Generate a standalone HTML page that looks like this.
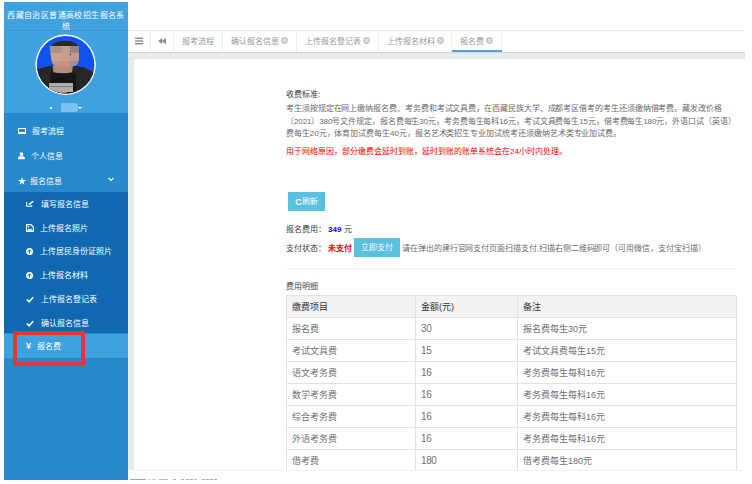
<!DOCTYPE html>
<html lang="zh-CN">
<head>
<meta charset="utf-8">
<style>
*{box-sizing:border-box;margin:0;padding:0}
html,body{width:752px;height:484px;overflow:hidden;background:#fff;font-family:"Liberation Sans",sans-serif;}
.abs{position:absolute}
#side{position:absolute;left:4px;top:2px;width:124px;height:478px;background:#2589cb;overflow:hidden}
#side .hd{position:absolute;left:0;top:0;width:124px;height:111px;background:#3fa1de}
#side .title{position:absolute;left:-10px;top:8px;width:144px;text-align:center;color:#fff;font-size:8px;letter-spacing:0.4px;line-height:11px;white-space:nowrap}
#side .hline{position:absolute;left:0;top:28px;width:124px;height:1px;background:#3a96d2}
.mi{position:absolute;left:0;width:124px;color:#fff;font-size:8px;line-height:10px;white-space:nowrap}
.mi .ic{position:absolute;top:0}
#sub{position:absolute;left:0;top:190px;width:124px;height:141px;background:#0f68b0}
#act{position:absolute;left:0;top:332px;width:124px;height:24px;background:#3fa1de}
#redbox{position:absolute;left:13px;top:331px;width:72px;height:35px;border:4px solid #ea3338}
#tabs{position:absolute;left:128px;top:30px;width:617px;height:22px;border-top:1px solid #e7eaec;background:#fff}
#tabs .sep{position:absolute;top:0;width:1px;height:21px;background:#eceeef}
#tabs .t{position:absolute;top:6px;font-size:8px;line-height:10px;color:#999;white-space:nowrap}
.cl{display:inline-block;width:7px;height:7px;vertical-align:middle;margin-left:1.5px;position:relative;top:-1px}
#gstrip{position:absolute;left:128px;top:52px;width:617px;height:7px;background:#e9eced;border-top:1px solid #d2d4d6;border-bottom:1px solid #e4e6e8;z-index:2}
#lstrip{position:absolute;left:128px;top:53px;width:5px;height:417px;background:#e9eced}
#content{position:absolute;left:133px;top:58px;width:612px;height:412px;background:#fff;overflow:hidden}
.tx{position:absolute;font-size:8px;line-height:10px;color:#6a6a6a;white-space:nowrap}
table{position:absolute;left:153px;top:237px;width:451px;border-collapse:collapse}
td,th{border:1px solid #e2e2e2;height:22px;font-size:9px;color:#707070;text-align:left;padding-left:5px;font-weight:normal;white-space:nowrap}
.dg{font-size:10px;letter-spacing:-0.4px}
th{background:#f3f3f3;color:#333;font-weight:normal}
</style>
</head>
<body>
<div id="side">
  <div class="hd"></div>
  <div class="title">西藏自治区普通高校招生报名系<br>统</div>
  <div class="hline"></div>
  <!-- avatar -->
  <svg class="abs" style="left:31px;top:32px" width="62" height="62" viewBox="0 0 62 62">
    <defs><clipPath id="cp"><circle cx="30.6" cy="30.7" r="28.8"/></clipPath><clipPath id="fc"><path d="M14.5 11.5 L44 11.5 L44 26 Q43 32.4 37 32.6 L23 32.6 Q18 32.4 16.5 27 Z"/></clipPath></defs>
    <circle cx="30.6" cy="30.7" r="30.2" fill="#fff"/>
    <g clip-path="url(#cp)" shape-rendering="crispEdges">
      <rect x="-3" y="-3" width="68" height="68" fill="#1452f0"/>
      <path d="M0 34.8 L5 34.4 L17.4 31.2 L24 33 L39.6 31.6 L50 33.8 L57 37.4 L62 39.5 L62 62 L0 62Z" fill="#262626" shape-rendering="auto"/>
      <path d="M17.4 31.5 L38 31.5 L37 38.2 Q27.5 40.2 18.5 38.2 Z" fill="#b38c7d" shape-rendering="auto"/>
      <path d="M15.4 38.6 Q27.5 41 41 38.4 L41 62 L15.4 62Z" fill="#161616" shape-rendering="auto"/>
      <rect x="13.5" y="48.5" width="24" height="9" fill="#adadad"/>
      <rect x="13.5" y="51.5" width="24" height="1" fill="#808080"/>
      <rect x="24" y="58.3" width="8" height="2" fill="#c87a40"/>
      <path d="M15.4 17 Q15 6.8 30 6.8 Q44.5 6.8 44.2 17 Z" fill="#2c2828" shape-rendering="auto"/>
      <g clip-path="url(#fc)">
      <rect x="14" y="11.5" width="12.3" height="7.7" fill="#a8938e"/>
      <rect x="26.3" y="11.5" width="8.5" height="7.7" fill="#c09c92"/>
      <rect x="34.8" y="11.5" width="10" height="7.7" fill="#958389"/>
      <rect x="14" y="19.2" width="12.3" height="7.7" fill="#cf9f90"/>
      <rect x="26.3" y="19.2" width="8.5" height="7.7" fill="#cc9d8e"/>
      <rect x="34.8" y="19.2" width="10" height="7.7" fill="#c6978b"/>
      <rect x="14" y="26.9" width="12.3" height="6" fill="#bb968e"/>
      <rect x="26.3" y="26.9" width="8.5" height="6" fill="#cf8f80"/>
      <rect x="34.8" y="26.9" width="10" height="6" fill="#9890a6"/>
      </g>
      <circle cx="35.2" cy="20.5" r="0.7" fill="#333" shape-rendering="auto"/>
    </g>
  </svg>
  <div class="abs" style="left:46px;top:105px;width:2px;height:2px;background:#fff;border-radius:0.5px"></div>
  <div class="abs" style="left:57px;top:101px;width:17px;height:9px;background:#7cc0ec;border-radius:0 3px 3px 0"></div>
  <div class="abs" style="left:74px;top:105px;width:0;height:0;border-left:2px solid transparent;border-right:2px solid transparent;border-top:2px solid #fff"></div>

  <!-- main menu -->
  <div class="mi" style="top:125px"><span class="ic" style="left:14px;top:1px;width:8px;height:6px;border:1px solid #fff;border-bottom-width:2px"></span><span style="position:absolute;left:28px">报考流程</span></div>
  <div class="mi" style="top:150px"><span class="ic" style="left:14px;top:0"><svg width="7" height="8" viewBox="0 0 7 8"><circle cx="3.5" cy="2.1" r="1.9" fill="#fff"/><path d="M0.1 7.2 L0.1 6 Q0.3 4.4 2 4.2 L5 4.2 Q6.7 4.4 6.9 6 L6.9 7.2Z" fill="#fff"/></svg></span><span style="position:absolute;left:27px">个人信息</span></div>
  <div class="mi" style="top:175px"><span class="ic" style="left:14px;top:-0.5px"><svg width="8" height="8" viewBox="0 0 10 10"><path d="M5 0 L6.2 3.6 L10 3.7 L7 6 L8 9.7 L5 7.5 L2 9.7 L3 6 L0 3.7 L3.8 3.6Z" fill="#fff"/></svg></span><span style="position:absolute;left:26px">报名信息</span><span style="position:absolute;left:104px;top:-2px"><svg width="6" height="5" viewBox="0 0 6 5"><path d="M0.5 1 L3 3.5 L5.5 1" stroke="#fff" stroke-width="1.2" fill="none"/></svg></span></div>

  <div id="sub"></div>
  <div class="mi" style="top:198px"><span class="ic" style="left:22px;top:1px"><svg width="8" height="7" viewBox="0 0 8 7"><path d="M0.6 0.9 L0.6 5.3 L5.6 5.3 L5.6 4.2" stroke="#fff" stroke-width="1.1" fill="none"/><path d="M2.8 3.6 L7.3 0.1" stroke="#fff" stroke-width="1.6"/></svg></span><span style="position:absolute;left:37px">填写报名信息</span></div>
  <div class="mi" style="top:222px"><span class="ic" style="left:22px;top:0"><svg width="8" height="8" viewBox="0 0 8 8"><path d="M0.6 0.6 L5 0.6 L7.4 3 L7.4 7.4 L0.6 7.4 Z" stroke="#fff" stroke-width="1.1" fill="none"/><path d="M1.2 6.8 L3 4.6 L4.3 5.6 L5.2 4.4 L6.8 6.8Z" fill="#fff"/><circle cx="2.6" cy="2.8" r="0.8" fill="#fff"/></svg></span><span style="position:absolute;left:36px">上传报名照片</span></div>
  <div class="mi" style="top:245px"><span class="ic" style="left:22px;top:1px"><svg width="7" height="7" viewBox="0 0 7 7"><circle cx="3.5" cy="3.5" r="3.5" fill="#fff"/><path d="M1.8 3.6 L3.5 1.8 L5.2 3.6 M3.5 2 L3.5 5.5" stroke="#0f68b0" stroke-width="1" fill="none"/></svg></span><span style="position:absolute;left:36px">上传居民身份证照片</span></div>
  <div class="mi" style="top:269px"><span class="ic" style="left:22px;top:1px"><svg width="7" height="7" viewBox="0 0 7 7"><circle cx="3.5" cy="3.5" r="3.5" fill="#fff"/><path d="M1.8 3.6 L3.5 1.8 L5.2 3.6 M3.5 2 L3.5 5.5" stroke="#0f68b0" stroke-width="1" fill="none"/></svg></span><span style="position:absolute;left:36px">上传报名材料</span></div>
  <div class="mi" style="top:293px"><span class="ic" style="left:22px;top:1px"><svg width="8" height="7" viewBox="0 0 8 7"><path d="M0.8 3.5 L3 5.8 L7.2 1.2" stroke="#fff" stroke-width="1.6" fill="none"/></svg></span><span style="position:absolute;left:37px">上传报名登记表</span></div>
  <div class="mi" style="top:317px"><span class="ic" style="left:22px;top:1px"><svg width="8" height="7" viewBox="0 0 8 7"><path d="M0.8 3.5 L3 5.8 L7.2 1.2" stroke="#fff" stroke-width="1.6" fill="none"/></svg></span><span style="position:absolute;left:37px">确认报名信息</span></div>

  <div id="act"></div>
  <div class="mi" style="top:340px"><span style="position:absolute;left:22px;top:-1px;font-size:9px;font-weight:bold">¥</span><span style="position:absolute;left:33px">报名费</span></div>
</div>
<div id="redbox"></div>

<div id="tabs">
  <svg class="abs" style="left:7px;top:6px" width="9" height="8" viewBox="0 0 9 8"><rect x="0" y="0.6" width="8.2" height="1.4" fill="#8a8a8a"/><rect x="0" y="3.3" width="8.2" height="1.4" fill="#8a8a8a"/><rect x="0" y="6" width="8.2" height="1.4" fill="#8a8a8a"/></svg>
  <div class="sep" style="left:22px"></div>
  <svg class="abs" style="left:30px;top:7px" width="8" height="6" viewBox="0 0 8 6"><path d="M4.2 0 L0 3 L4.2 6Z M8 0 L3.8 3 L8 6Z" fill="#8a8a8a"/></svg>
  <div class="sep" style="left:45px"></div>
  <div class="t" style="left:54px">报考流程</div>
  <div class="sep" style="left:94px"></div>
  <div class="t" style="left:103px">确认报名信息<svg class="cl" width="7" height="7" viewBox="0 0 7 7"><circle cx="3.5" cy="3.5" r="3.4" fill="#c8c8c8"/><path d="M2.1 2.1 L4.9 4.9 M4.9 2.1 L2.1 4.9" stroke="#fff" stroke-width="0.9"/></svg></div>
  <div class="sep" style="left:168px"></div>
  <div class="t" style="left:177px">上传报名登记表<svg class="cl" width="7" height="7" viewBox="0 0 7 7"><circle cx="3.5" cy="3.5" r="3.4" fill="#c8c8c8"/><path d="M2.1 2.1 L4.9 4.9 M4.9 2.1 L2.1 4.9" stroke="#fff" stroke-width="0.9"/></svg></div>
  <div class="sep" style="left:250px"></div>
  <div class="t" style="left:259px">上传报名材料<svg class="cl" width="7" height="7" viewBox="0 0 7 7"><circle cx="3.5" cy="3.5" r="3.4" fill="#c8c8c8"/><path d="M2.1 2.1 L4.9 4.9 M4.9 2.1 L2.1 4.9" stroke="#fff" stroke-width="0.9"/></svg></div>
  <div class="sep" style="left:323px"></div>
  <div class="t" style="left:332px">报名费<svg class="cl" width="7" height="7" viewBox="0 0 7 7"><circle cx="3.5" cy="3.5" r="3.4" fill="#c8c8c8"/><path d="M2.1 2.1 L4.9 4.9 M4.9 2.1 L2.1 4.9" stroke="#fff" stroke-width="0.9"/></svg></div>
  <div class="sep" style="left:373px"></div>
  <div class="abs" style="left:324px;top:19px;width:50px;height:2px;background:#4aa3df"></div>
</div>
<div id="gstrip"></div>
<div id="lstrip"></div>
<div class="abs" style="left:133px;top:58px;width:1px;height:412px;background:#e4e6e8;z-index:3"></div>

<div id="content">
  <div class="tx" style="left:153px;top:31.5px;color:#3a3a3a">收费标准:</div>
  <div class="tx" style="left:153px;top:46px;letter-spacing:-0.075px">考生须按规定在网上缴纳报名费、考务费和考试文具费，在西藏民族大学、成都考区借考的考生还须缴纳借考费。藏发改价格</div>
  <div class="tx" style="left:153px;top:58.5px;letter-spacing:-0.09px">〔2021〕380号文件规定，报名费每生30元，考务费每生每科16元，考试文具费每生15元，借考费每生180元，外语口试（英语）</div>
  <div class="tx" style="left:153px;top:71px;letter-spacing:-0.06px">费每生20元，体育加试费每生40元，报名艺术类招生专业加试统考还须缴纳艺术类专业加试费。</div>
  <div class="tx" style="left:153px;top:89px;color:#f00">用于网络原因，部分缴费会延时到账，延时到账的账单系统会在24小时内处理。</div>

  <div class="abs" style="left:155px;top:134px;width:37px;height:19px;background:#5bc0de;color:#fff;font-size:8px;line-height:19px;text-align:center;"><b style="font-size:9px;position:relative;top:0.5px">C</b>刷新</div>
  <div class="tx" style="left:153px;top:167px;color:#3a3a3a">报名费用：<b style="color:#00f;margin-left:2px">349</b> 元</div>
  <div class="tx" style="left:153px;top:185.5px;color:#3a3a3a">支付状态：<b style="color:#f00;margin-left:2px">未支付</b></div>
  <div class="abs" style="left:221px;top:180px;width:46px;height:19px;background:#5bc0de;color:#fff;font-size:8px;line-height:19px;text-align:center">立即支付</div>
  <div class="tx" style="left:269px;top:185.5px;letter-spacing:-0.07px">请在弹出的建行官网支付页面扫描支付,扫描右侧二维码即可（可用微信，支付宝扫描）</div>
  <div class="abs" style="left:153px;top:210px;width:452px;height:1px;background:#eee"></div>
  <div class="tx" style="left:153px;top:224px;color:#444">费用明细</div>
  <table>
    <tr><th style="width:129px">缴费项目</th><th style="width:102px">金额(元)</th><th>备注</th></tr>
    <tr><td>报名费</td><td><span class="dg">30</span></td><td>报名费每生30元</td></tr>
    <tr><td>考试文具费</td><td><span class="dg">15</span></td><td>考试文具费每生15元</td></tr>
    <tr><td>语文考务费</td><td><span class="dg">16</span></td><td>考务费每生每科16元</td></tr>
    <tr><td>数学考务费</td><td><span class="dg">16</span></td><td>考务费每生每科16元</td></tr>
    <tr><td>综合考务费</td><td><span class="dg">16</span></td><td>考务费每生每科16元</td></tr>
    <tr><td>外语考务费</td><td><span class="dg">16</span></td><td>考务费每生每科16元</td></tr>
    <tr><td>借考费</td><td><span class="dg">180</span></td><td>借考费每生180元</td></tr>
  </table>
</div>
<div class="abs" style="left:133px;top:470px;width:612px;height:1px;background:#eef0f1"></div>
<div class="abs" style="left:130px;top:479px;width:16px;height:1px;background:#7fb2e2"></div>
<div class="abs" style="left:149px;top:479px;width:1px;height:1px;background:#a9a0e0"></div>
<div class="abs" style="left:152px;top:479px;width:4px;height:1px;background:#c0d0f0"></div>
<div class="abs" style="left:159px;top:479px;width:9px;height:1px;background:#a8b8ea"></div>
<div class="abs" style="left:173px;top:479px;width:3px;height:1px;background:#b8b0a8"></div>
<div class="abs" style="left:181px;top:479px;width:3px;height:1px;background:#b8b0a8"></div>
<div class="abs" style="left:185.5px;top:479px;width:3px;height:1px;background:#b8b0a8"></div>
<div class="abs" style="left:190px;top:479px;width:3px;height:1px;background:#b8b0a8"></div>
<div class="abs" style="left:194px;top:479px;width:3px;height:1px;background:#c8b8a8"></div>
<div class="abs" style="left:201.5px;top:479px;width:3px;height:1px;background:#b8b0a8"></div>
<div class="abs" style="left:205.5px;top:479px;width:3px;height:1px;background:#b8b0a8"></div>
<div class="abs" style="left:210px;top:479px;width:3px;height:1px;background:#b8b0a8"></div>
<div class="abs" style="left:214px;top:479px;width:3px;height:1px;background:#b8b0a8"></div>
</body>
</html>
